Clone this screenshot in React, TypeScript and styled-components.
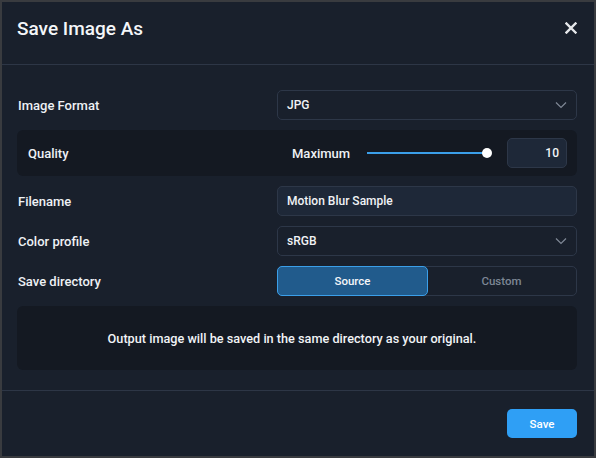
import React from "react";
import styled, { createGlobalStyle } from "styled-components";

const Global = createGlobalStyle`
  html, body { margin: 0; padding: 0; background: #3a3c40; }
  body { font-family: Roboto, "Noto Sans", sans-serif; -webkit-font-smoothing: antialiased; }
  * { box-sizing: border-box; }
`;

const Dialog = styled.div`
  width: 596px;
  height: 458px;
  border: 2px solid #393b3f;
  background: #19202c;
  display: flex;
  flex-direction: column;
  color: #f1f3f6;
`;

const Header = styled.div`
  height: 63px;
  padding: 14px 17px 0 15px;
  display: flex;
  justify-content: space-between;
  align-items: flex-start;
  border-bottom: 1px solid #2d3646;
`;

const Title = styled.h1`
  margin: 0;
  font-size: 19px;
  line-height: 26px;
  font-weight: 500;
  color: #f4f6f9;
`;

const CloseButton = styled.button`
  background: none;
  border: none;
  padding: 0;
  margin-top: 6px;
  width: 12px;
  height: 12px;
  cursor: pointer;
  display: flex;
`;

const Body = styled.div`
  padding: 25px 17px 20px 15px;
  display: flex;
  flex-direction: column;
  gap: 10px;
  border-bottom: 1px solid #2d3646;
`;

const Row = styled.div`
  display: grid;
  grid-template-columns: 260px 1fr;
  align-items: center;
  min-height: 30px;
`;

const Label = styled.span`
  font-size: 13px;
  font-weight: 500;
  color: #eef1f5;
  padding-left: 1px;
`;

const Field = styled.div<{ $filled?: boolean }>`
  height: 30px;
  border: 1px solid #2d3748;
  border-radius: 5px;
  background: ${(p) => (p.$filled ? "#1e2838" : "#19202c")};
  display: flex;
  align-items: center;
  justify-content: space-between;
  padding: 0 9px 0 9px;
  font-size: 12px;
  font-weight: 500;
  color: #f1f3f6;
`;

const Chevron = () => (
  <svg width="12" height="8" viewBox="0 0 12 8" fill="none">
    <path d="M1 1.5 L6 6.5 L11 1.5" stroke="#7f8896" strokeWidth="1.2" />
  </svg>
);

const QualityBox = styled.div`
  display: grid;
  grid-template-columns: 250px 1fr;
  align-items: center;
  height: 46px;
  padding: 0 10px;
  background: #141922;
  border-radius: 6px;
`;

const QualityControls = styled.div`
  display: flex;
  align-items: center;
  padding-left: 15px;
`;

const SubLabel = styled.span`
  font-size: 13px;
  font-weight: 500;
  color: #eef1f5;
  width: 75px;
`;

const SliderTrack = styled.div`
  position: relative;
  width: 121px;
  height: 2px;
  background: #3b9fe9;
  margin-right: 19px;
`;

const SliderThumb = styled.div`
  position: absolute;
  right: -4px;
  top: -4px;
  width: 10px;
  height: 10px;
  border-radius: 50%;
  background: #ffffff;
`;

const NumberBox = styled.div`
  width: 60px;
  height: 30px;
  border: 1px solid #2d3748;
  border-radius: 5px;
  background: #1e2838;
  display: flex;
  align-items: center;
  justify-content: flex-end;
  padding-right: 7px;
  font-size: 12px;
  font-weight: 500;
  color: #f1f3f6;
`;

const Toggle = styled.div`
  height: 30px;
  border: 1px solid #2d3748;
  border-radius: 5px;
  display: grid;
  grid-template-columns: 150px 1fr;
`;

const ToggleOption = styled.button<{ $active?: boolean }>`
  margin: -1px 0 -1px -1px;
  border: 1px solid ${(p) => (p.$active ? "#3b9fe9" : "transparent")};
  border-radius: 5px;
  background: ${(p) => (p.$active ? "#215b8c" : "transparent")};
  color: ${(p) => (p.$active ? "#f4f6f9" : "#7d8795")};
  font-family: inherit;
  font-size: 11.5px;
  font-weight: 500;
  cursor: pointer;
`;

const InfoBox = styled.div`
  height: 64px;
  background: #141922;
  border-radius: 6px;
  display: flex;
  align-items: center;
  justify-content: center;
  padding: 1px 10px 0 0;
  font-size: 12.7px;
  font-weight: 500;
  color: #f1f3f6;
`;

const Footer = styled.div`
  flex: 1;
  display: flex;
  justify-content: flex-end;
  align-items: flex-start;
  padding: 18px 17px 0 0;
`;

const SaveButton = styled.button`
  width: 70px;
  height: 29px;
  border: none;
  border-radius: 5px;
  background: #2f9ff5;
  color: #ffffff;
  font-family: inherit;
  font-size: 11.5px;
  font-weight: 500;
  cursor: pointer;
`;

export default function App() {
  return (
    <>
      <Global />
      <Dialog>
        <Header>
          <Title>Save Image As</Title>
          <CloseButton aria-label="Close">
            <svg width="12" height="12" viewBox="0 0 12 12">
              <path d="M1.5 1.5 L10.5 10.5 M10.5 1.5 L1.5 10.5" stroke="#e6e8eb" strokeWidth="2.4" strokeLinecap="square" />
            </svg>
          </CloseButton>
        </Header>
        <Body>
          <Row>
            <Label>Image Format</Label>
            <Field>
              <span>JPG</span>
              <Chevron />
            </Field>
          </Row>
          <QualityBox>
            <Label>Quality</Label>
            <QualityControls>
              <SubLabel>Maximum</SubLabel>
              <SliderTrack>
                <SliderThumb />
              </SliderTrack>
              <NumberBox>10</NumberBox>
            </QualityControls>
          </QualityBox>
          <Row>
            <Label>Filename</Label>
            <Field $filled>
              <span>Motion Blur Sample</span>
            </Field>
          </Row>
          <Row>
            <Label>Color profile</Label>
            <Field>
              <span>sRGB</span>
              <Chevron />
            </Field>
          </Row>
          <Row>
            <Label>Save directory</Label>
            <Toggle>
              <ToggleOption $active>Source</ToggleOption>
              <ToggleOption>Custom</ToggleOption>
            </Toggle>
          </Row>
          <InfoBox>Output image will be saved in the same directory as your original.</InfoBox>
        </Body>
        <Footer>
          <SaveButton>Save</SaveButton>
        </Footer>
      </Dialog>
    </>
  );
}
